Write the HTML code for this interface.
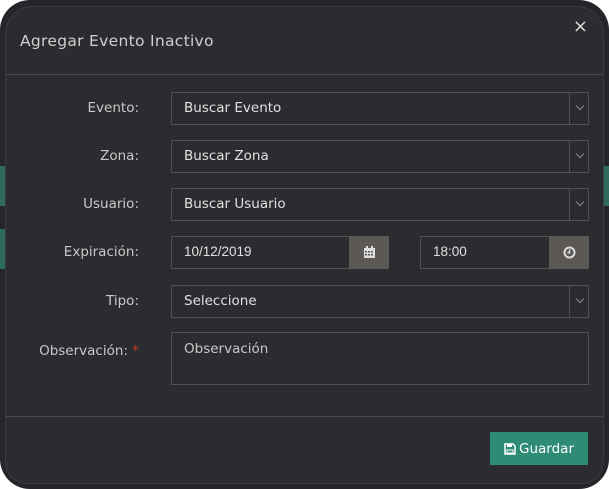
<!DOCTYPE html>
<html><head><meta charset="utf-8"><style>
*{box-sizing:border-box;margin:0;padding:0}
html,body{width:609px;height:489px;background:#fff;overflow:hidden;font-family:"DejaVu Sans","Liberation Sans",sans-serif}
.frame{position:absolute;left:0;top:0;width:609px;height:489px;background:#25262a;border-radius:30px;overflow:hidden}
.g1{position:absolute;left:0;top:166px;width:5px;height:40px;background:#2e6b5c}
.g2{position:absolute;left:0;top:229px;width:5px;height:40px;background:#2e6b5c}
.g3{position:absolute;right:0;top:166px;width:5px;height:40px;background:#2e6b5c}
.modal{position:absolute;left:5px;top:6px;width:599px;height:478px;background:#2b2c30;border-radius:28px 28px 22px 22px;border:1px solid #3a3b3f}
.hdr{position:absolute;left:0;top:0;width:100%;height:68px;border-bottom:1px solid #48494d}
.title{position:absolute;left:14px;top:25px;font-size:15.5px;color:#cfcfcf;letter-spacing:0.3px}
.x{position:absolute;right:15px;top:9px;color:#ddd;font-size:18px}
.lbl{position:absolute;right:464px;font-size:13.5px;color:#c8c8c8;text-align:right;white-space:nowrap}
.sel{position:absolute;left:165px;width:418px;height:33px;border:1px solid #505155;color:#e0e0e0;font-size:13.5px;padding:7px 12px}
.sel:after{content:"";position:absolute;right:0;top:0;width:18px;height:31px;border-left:1px solid #505155}
.chev{position:absolute;right:5px;top:10px;width:6px;height:6px;border-right:1px solid #888;border-bottom:1px solid #888;transform:rotate(45deg)}
.inp{position:absolute;height:33px;border:1px solid #505155;color:#e0e0e0;font-size:13.5px;padding:7px 12px;font-family:"Liberation Sans",sans-serif}
.add{position:absolute;top:-1px;right:-1px;width:40px;height:33px;background:#5c5856;display:flex;align-items:center;justify-content:center}
.ta{position:absolute;left:165px;top:325px;width:418px;height:53px;border:1px solid #505155;color:#c8c8c8;font-size:13.5px;padding:8px 12px}
.ftr{position:absolute;left:0;top:409px;width:100%;border-top:1px solid #48494d}
.btn{position:absolute;left:484px;top:425px;width:98px;height:33px;background:#2e8b76;color:#fff;font-size:13.5px;display:flex;align-items:center;justify-content:center;gap:3px}
</style></head><body>
<div class="frame">
<div class="g1"></div><div class="g2"></div><div class="g3"></div>
<div class="modal">
<div class="hdr"><div class="title">Agregar Evento Inactivo</div><div class="x">×</div></div>
<div class="lbl" style="top:93px">Evento:</div>
<div class="sel" style="top:85px">Buscar Evento<span class="chev"></span></div>
<div class="lbl" style="top:141px">Zona:</div>
<div class="sel" style="top:133px">Buscar Zona<span class="chev"></span></div>
<div class="lbl" style="top:189px">Usuario:</div>
<div class="sel" style="top:181px">Buscar Usuario<span class="chev"></span></div>
<div class="lbl" style="top:237px">Expiración:</div>
<div class="inp" style="left:165px;top:229px;width:218px">10/12/2019<div class="add"><svg width="13" height="13" viewBox="0 0 13 13"><rect x="1" y="2" width="11" height="10" fill="#ddd"/><rect x="3" y="0" width="2" height="3" fill="#ddd"/><rect x="8" y="0" width="2" height="3" fill="#ddd"/><g fill="#5c5856"><rect x="2" y="5" width="2" height="1.5"/><rect x="5" y="5" width="2" height="1.5"/><rect x="8" y="5" width="2" height="1.5"/><rect x="2" y="8" width="2" height="1.5"/><rect x="5" y="8" width="2" height="1.5"/><rect x="8" y="8" width="2" height="1.5"/></g></svg></div></div>
<div class="inp" style="left:414px;top:229px;width:169px">18:00<div class="add"><svg width="13" height="13" viewBox="0 0 13 13"><circle cx="6.5" cy="6.5" r="5" fill="none" stroke="#ddd" stroke-width="2"/><path d="M6.5 3.5V6.8H4.5" fill="none" stroke="#ddd" stroke-width="1.5"/></svg></div></div>
<div class="lbl" style="top:286px">Tipo:</div>
<div class="sel" style="top:278px">Seleccione<span class="chev"></span></div>
<div class="lbl" style="top:336px">Observación: <span style="color:#c0392b">*</span></div>
<div class="ta">Observación</div>
<div class="ftr"></div>
<div class="btn"><svg width="12" height="12" viewBox="0 0 12 12"><path d="M1 1H9L11 3V11H1Z" fill="none" stroke="#fff" stroke-width="1.5"/><rect x="3" y="1" width="5" height="3" fill="#fff"/><rect x="3" y="7" width="6" height="3" fill="none" stroke="#fff"/></svg>Guardar</div>
</div>
</div>
</body></html>
